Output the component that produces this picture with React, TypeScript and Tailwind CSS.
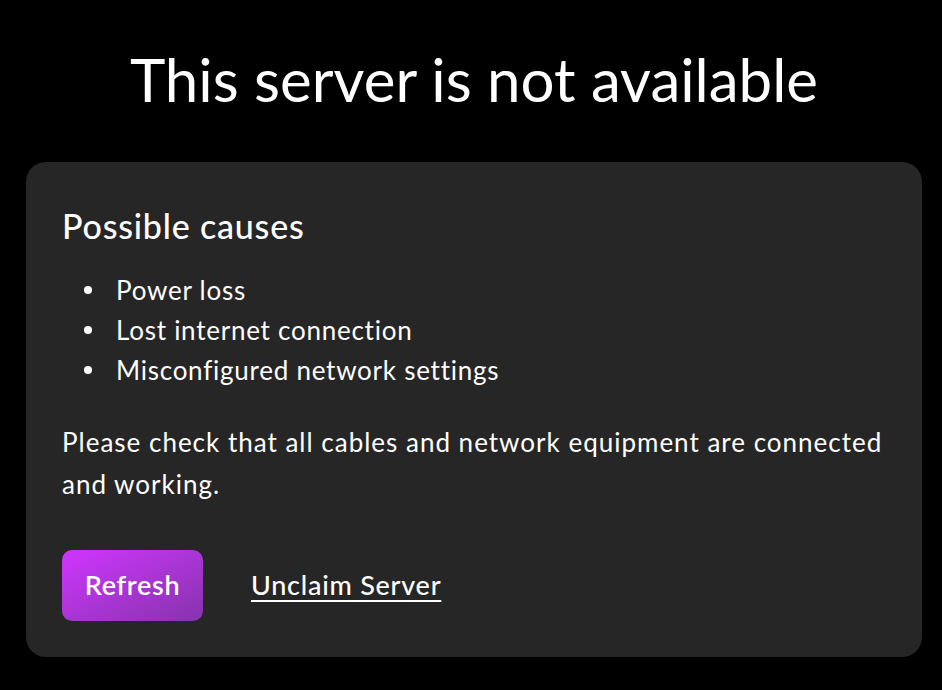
const causes = ["Power loss", "Lost internet connection", "Misconfigured network settings"];

export default function App() {
  return (
    <div className="min-h-[690px] bg-black text-white font-['Lato',_'Liberation_Sans',_sans-serif]">
      <div className="ml-[26px] w-[896px] pt-[40px]">
        <h1 className="text-center text-[60px] leading-[78px] font-normal">This server is not available</h1>
        <div className="mt-[44px] rounded-[20px] bg-[#262626] px-[36px] pt-[44px] pb-[36px]">
          <h2 className="text-[34px] leading-[40px] font-medium tracking-[0.8px]">Possible causes</h2>
          <ul className="mt-[24px] text-[26px] leading-[40px] tracking-[0.75px]">
            {causes.map((c) => (
              <li key={c} className="flex items-center">
                <span className="flex w-[54px] justify-center pr-[2px]">
                  <span className="h-[8px] w-[8px] rounded-full bg-white" />
                </span>
                {c}
              </li>
            ))}
          </ul>
          <p className="mt-[31px] text-[26px] leading-[42px] tracking-[1px]">
            Please check that all cables and network equipment are connected and working.
          </p>
          <div className="mt-[45px] flex items-center gap-[48px]">
            <button className="h-[71px] w-[141px] rounded-[10px] bg-gradient-to-br from-[#d034ff] to-[#8633ad] text-[27px] font-semibold tracking-[0.7px]">
              Refresh
            </button>
            <a href="#" className="text-[27px] font-medium tracking-[0.75px] underline underline-offset-[5px] decoration-2">
              Unclaim Server
            </a>
          </div>
        </div>
      </div>
    </div>
  );
}
